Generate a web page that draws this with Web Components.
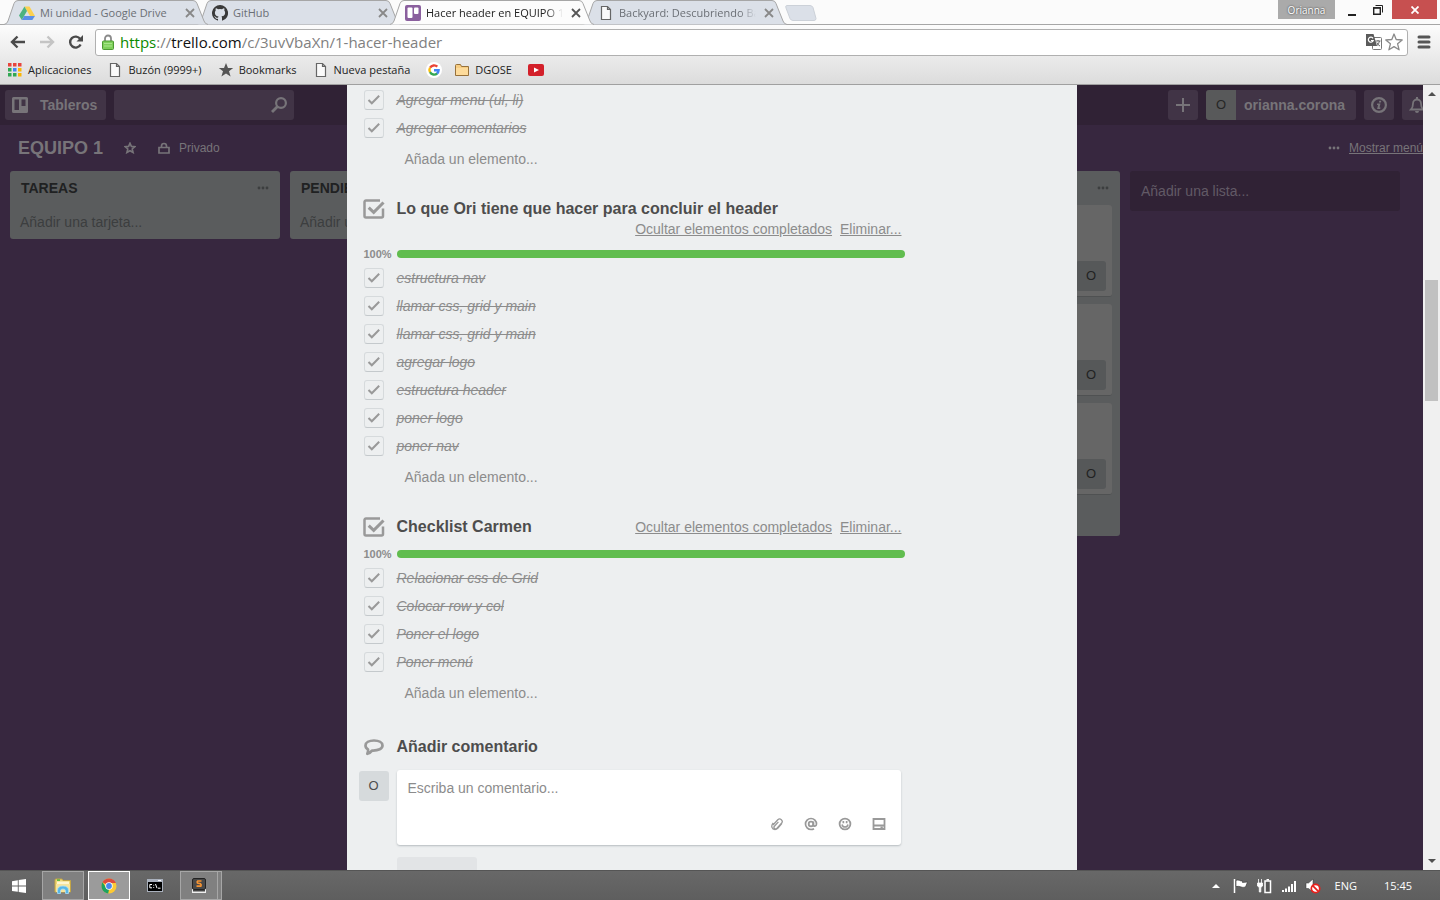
<!DOCTYPE html>
<html lang="es">
<head>
<meta charset="utf-8">
<title>Hacer header en EQUIPO 1</title>
<style>
html, body { margin: 0; height: 100%; overflow: hidden; }
body { font-family: "Liberation Sans", Arial, sans-serif; font-size: 14px; line-height: 20px; color: #4d4d4d; }
</style>
</head>
<body>
<desktop-screen>
  <browser-chrome slot="chrome">
    <browser-tab slot="tabs" icon="drive">Mi unidad - Google Drive</browser-tab>
    <browser-tab slot="tabs" icon="github">GitHub</browser-tab>
    <browser-tab slot="tabs" icon="trello" active fade>Hacer header en EQUIPO 1</browser-tab>
    <browser-tab slot="tabs" icon="page" fade>Backyard: Descubriendo Backyard</browser-tab>
    <bookmark-link slot="marks" icon="apps">Aplicaciones</bookmark-link>
    <bookmark-link slot="marks" icon="page">Buzón (9999+)</bookmark-link>
    <bookmark-link slot="marks" icon="starfull">Bookmarks</bookmark-link>
    <bookmark-link slot="marks" icon="page">Nueva pestaña</bookmark-link>
    <bookmark-link slot="marks" icon="google" label="Google"></bookmark-link>
    <bookmark-link slot="marks" icon="folder">DGOSE</bookmark-link>
    <bookmark-link slot="marks" icon="youtube" label="YouTube"></bookmark-link>
  </browser-chrome>
  <board-page slot="page">
    <board-list heading="TAREAS"></board-list>
    <board-list heading="PENDIENTES"></board-list>
    <board-list></board-list>
    <board-list>
      <board-card></board-card>
      <board-card></board-card>
      <board-card></board-card>
    </board-list>
    <card-window slot="window">
      <check-list>
        <check-item>Agregar menu (ul, li)</check-item>
        <check-item>Agregar comentarios</check-item>
      </check-list>
      <check-list heading="Lo que Ori tiene que hacer para concluir el header">
        <check-item>estructura nav</check-item>
        <check-item>llamar css, grid y main</check-item>
        <check-item>llamar css, grid y main</check-item>
        <check-item>agregar logo</check-item>
        <check-item>estructura header</check-item>
        <check-item>poner logo</check-item>
        <check-item>poner nav</check-item>
      </check-list>
      <check-list heading="Checklist Carmen">
        <check-item>Relacionar css de Grid</check-item>
        <check-item>Colocar row y col</check-item>
        <check-item>Poner el logo</check-item>
        <check-item>Poner menú</check-item>
      </check-list>
      <comment-form></comment-form>
    </card-window>
  </board-page>
  <task-bar slot="taskbar"></task-bar>
</desktop-screen>

<script>
const define = (name, render) => customElements.define(name, class extends HTMLElement {
  constructor() {
    super();
    const t = document.createElement('template');
    t.innerHTML = render(this);
    this.attachShadow({ mode: 'open' }).append(t.content.cloneNode(true));
  }
});

/* Icon set: [width, height, markup] */
const ICONS = {
  drive: [16, 16, '<path d="M5.5 1.5h5L16 11h-5z" fill="#fcd050"/><path d="M5.5 1.5 8 6 2.800 15 0 10.500z" fill="#4db380"/><path d="M5.200 11H16l-2.700 4H2.800z" fill="#5b8fe8"/>'],
  github: [16, 16, '<path fill="#3a3a3a" d="M8 0a8 8 0 0 0-2.530 15.590c.4.070.55-.170.55-.380v-1.340c-2.230.480-2.700-1.070-2.700-1.070-.360-.930-.890-1.170-.890-1.170-.730-.5.050-.490.050-.490.800.060 1.230.830 1.230.830.720 1.220 1.880.870 2.330.660.070-.520.280-.870.510-1.070-1.780-.200-3.640-.890-3.640-3.950 0-.870.310-1.590.820-2.150-.080-.200-.360-1.020.080-2.120 0 0 .670-.210 2.200.820a7.700 7.700 0 0 1 4 0c1.530-1.040 2.200-.820 2.200-.820.440 1.100.160 1.920.080 2.120.510.560.820 1.270.820 2.150 0 3.070-1.870 3.750-3.650 3.950.290.250.540.730.540 1.480v2.190c0 .210.150.460.550.380A8 8 0 0 0 8 0z"/>'],
  trello: [16, 16, '<rect width="16" height="16" rx="2" fill="#8a5f9e"/><rect x="2.500" y="2.500" width="5" height="10.500" rx="1" fill="#fff"/><rect x="9" y="2.500" width="4.500" height="6.500" rx="1" fill="#fff"/>'],
  page: [16, 16, '<path d="M3.500 1.500h6l3 3v10h-9z M9.500 1.500v3h3" fill="#fafafa" stroke="#666" stroke-width="1.200"/>'],
  apps: [16, 14, '<g transform="translate(1 0)"><path fill="#e8453c" d="M0 0h3.500v3.500H0zM5 0h3.500v3.500H5zM10 0h3.500v3.500H10z"/><path fill="#31a853" d="M0 5h3.500v3.500H0zM0 10h3.500v3.500H0z"/><path fill="#4285f4" d="M5 5h3.500v3.500H5z"/><path fill="#31a853" d="M5 10h3.500v3.500H5z"/><path fill="#fbb605" d="M10 5h3.500v3.500H10zM10 10h3.500v3.500H10z"/></g>'],
  starfull: [16, 16, '<path fill="#555" d="m8 1 2 5h5.200l-4.200 3.300 1.600 5.300L8 11.400l-4.600 3.200L5 9.300.8 6H6z"/>'],
  google: [16, 16, '<circle cx="8" cy="8" r="8" fill="#fff"/><g fill="none" stroke-width="2.400"><path d="M4.100 5.700A4.600 4.600 0 0 1 11.300 4.700" stroke="#ea4335"/><path d="M4 10.200a4.600 4.600 0 0 1 0-4.400" stroke="#fbbc05"/><path d="M11.200 11.300A4.600 4.600 0 0 1 4 10.200" stroke="#34a853"/><path d="M8 8.200h4.600a4.600 4.600 0 0 1-1.600 3.300" stroke="#4285f4"/></g>'],
  folder: [16, 16, '<path d="M1.500 3.500q0-1 1-1h4l1 2h7v9h-13z" fill="#f7cd82" stroke="#97713a"/><path d="M2 6h12v7H2z" fill="#fddb9b"/>'],
  youtube: [16, 12, '<rect width="16" height="12" rx="2" fill="#d3202a"/><path d="M6 3.500v5L11 6z" fill="#fff"/>'],
  close: [10, 10, '<path d="m1 1 8 8M9 1 1 9" stroke="currentColor" stroke-width="1.800"/>'],
  back: [16, 14, '<path d="M15 7H2M7.500 1.500 2 7l5.500 5.500" fill="none" stroke="currentColor" stroke-width="2.400"/>'],
  forward: [16, 14, '<path d="M1 7h13M8.500 1.500 14 7l-5.500 5.500" fill="none" stroke="currentColor" stroke-width="2.400"/>'],
  reload: [16, 16, '<path d="M12.600 10.500a5.500 5.500 0 1 1-.4-5.500" fill="none" stroke="currentColor" stroke-width="2.400"/><path d="M15 1v6.500H8.500z" fill="currentColor"/>'],
  lock: [12, 16, '<path d="M3 8V4.500a3 3 0 0 1 6 0V8" fill="none" stroke="#8a8a8a" stroke-width="1.800"/><rect x=".5" y="7" width="11" height="8.500" rx="1" fill="#7ed05a" stroke="#4c9a33"/><path d="M2 9.500h8M2 12h8" stroke="#a8e68c"/>'],
  translate: [16, 16, '<rect x="6.500" y="3.500" width="9" height="12" rx="1" fill="#fff" stroke="#777"/><path d="M0 0h7.500l3.500 12H0z" fill="#5b5b5b"/><path d="M7 4.400A2.500 2.500 0 1 0 7.200 6.500H5" fill="none" stroke="#fff" stroke-width="1.200"/><path d="M9.500 7h5M12 6v1M13.500 7q-.5 3-3 5M10.800 8.500q1 2.500 3.200 3.500" fill="none" stroke="#666"/>'],
  star: [18, 18, '<path d="m9 1 2.200 5.500 6 .5-4.600 3.800 1.500 6L9 13.600l-5.100 3.200 1.500-6L.8 7l6-.5z" fill="#fff" stroke="#8a8a8a" stroke-width="1.300" stroke-linejoin="round"/>'],
  menu: [14, 14, '<path d="M2 2h10M2 7h10M2 12h10" stroke="#555" stroke-width="3" stroke-linecap="round"/>'],
  min: [8, 12, '<path d="M0 10h8v2H0z" fill="#222"/>'],
  restore: [10, 10, '<path d="M.7 3h6.600v6.300H.7z" fill="none" stroke="#222" stroke-width="1.400"/><path d="M2.500.5h7v7M0 2.700h8" fill="none" stroke="#222"/>'],
  winclose: [8, 8, '<path d="m.5.5 7 7M7.500.5l-7 7" stroke="#fff" stroke-width="1.800"/>'],
  board: [16, 16, '<path fill="currentColor" fill-rule="evenodd" d="M1.500 0h13A1.500 1.500 0 0 1 16 1.500v13a1.500 1.500 0 0 1-1.500 1.500h-13A1.500 1.500 0 0 1 0 14.500v-13A1.500 1.500 0 0 1 1.500 0zM2.500 2.500v10.500h4.500V2.500zM9.500 2.500V9h4V2.500z"/>'],
  search: [16, 16, '<circle cx="10" cy="6" r="4.900" fill="none" stroke="currentColor" stroke-width="2.200"/><path d="M6.500 9.500 1 15" stroke="currentColor" stroke-width="2.800"/>'],
  plus: [14, 14, '<path d="M7 0v14M0 7h14" stroke="currentColor" stroke-width="2"/>'],
  info: [16, 16, '<circle cx="8" cy="8" r="6.900" fill="none" stroke="currentColor" stroke-width="2.200"/><path d="M8.300 3.700h2l-.4 1.900H7.900zM6.200 6.500h3.300l-1 4.100h1l-.3 1.500H6.100l1-4.100H5.900z" fill="currentColor"/>'],
  bell: [16, 16, '<path d="M2 12.500c2-2 2-3.500 2-6a4 4 0 0 1 8 0c0 2.500 0 4 2 6z" fill="none" stroke="currentColor" stroke-width="1.800"/><path d="M6 14a2 2 0 0 0 4 0zM7 0h2v3H7z" fill="currentColor"/>'],
  hollowstar: [12, 12, '<path d="m6 1.200 1.400 3.200 3.500.3-2.700 2.300.9 3.500L6 8.700l-3.100 1.800.9-3.500L1.100 4.700l3.500-.3z" fill="none" stroke="currentColor" stroke-width="1.600"/>'],
  padlock: [12, 12, '<path d="M1 5.500h10V11H1zM3.500 5.500V4a2.500 2.500 0 0 1 5 0v1.500" fill="none" stroke="currentColor" stroke-width="1.700"/>'],
  dots: [12, 4, '<circle cx="2" cy="2" r="1.400" fill="currentColor"/><circle cx="6" cy="2" r="1.400" fill="currentColor"/><circle cx="10" cy="2" r="1.400" fill="currentColor"/>'],
  check: [20, 20, '<path d="m4.500 10 3.300 3.300 7.400-7.500" fill="none" stroke="currentColor" stroke-width="2"/>'],
  checklist: [22, 20, '<path d="M17 1.500H3A1.500 1.500 0 0 0 1.500 3v14A1.500 1.500 0 0 0 3 18.500h15.500a1.500 1.500 0 0 0 1.500-1.500V9.500" fill="none" stroke="currentColor" stroke-width="2.500"/><path d="m5.700 8.700 5 4.700L20.500 3.500" fill="none" stroke="currentColor" stroke-width="3"/>'],
  comment: [20, 18, '<path d="M10 2.500c-5 0-8.500 2-8.500 5 0 2 1.200 3.200 2.500 4q.3 2-.7 4.300C5.500 15 7 14 8 12.600c6.500.3 10.500-2 10.500-5.100 0-3-3.500-5-8.500-5z" fill="none" stroke="currentColor" stroke-width="2.700" stroke-linejoin="round"/>'],
  clip: [14, 14, '<path d="m3 8 4.800-5.200a2.500 2.500 0 0 1 3.700 3.400L6.800 11.400a1.600 1.600 0 0 1-2.400-2.200l4-4.300M3.200 5.800C.5 9 2 12.500 5 12.600q1.500 0 3-1.600l4-4.600" fill="none" stroke="currentColor" stroke-width="1.300"/>'],
  at: [14, 14, '<circle cx="7" cy="7" r="2.300" fill="none" stroke="currentColor" stroke-width="1.800"/><path d="M9.400 4.500V8q.2 1.300 1.400 1.200 1.700-.3 1.700-2.200A5.500 5.500 0 1 0 7 12.500q1.700 0 3-.8" fill="none" stroke="currentColor" stroke-width="1.700"/>'],
  smile: [14, 14, '<circle cx="7" cy="7" r="5.400" fill="none" stroke="currentColor" stroke-width="1.800"/><path d="M4.500 4h1.700v2.200H4.500zM7.800 4h1.700v2.200H7.800z" fill="currentColor"/><path d="M4 7.500q.5 2.500 3 2.500t3-2.500" fill="none" stroke="currentColor" stroke-width="1.600"/>'],
  tray: [14, 14, '<path d="M1.500 2h11v10h-11zM2 8.500h10" fill="none" stroke="currentColor" stroke-width="1.800"/><path d="M8.500 9.500h2.300v1.500H8.500z" fill="currentColor"/>'],
  windows: [14, 14, '<path d="M0 2.200 5.800 1.200v5.300H0zM6.700 1 14 0v6.500H6.700zM0 7.500h5.800v5.300L0 11.900zM6.700 7.500H14V14l-7.300-1z" fill="#fff"/>'],
  explorer: [18, 16, '<path d="M1 2q0-1 1-1h6l1 1.500h7.500V14H1z" fill="#f0d775" stroke="#c3a545"/><path d="M3 3.500h12v3H3z" fill="#fff6d0"/><path d="M3 1.500h3v1.200H3z" fill="#29b330"/><path d="M2 6h14v8H2z" fill="#f7e49b"/><path d="M3.500 15.500v-3Q3.500 8 9 8t5.500 4.500v3h-3v-2.700q0-1.800-2.500-1.800t-2.500 1.800v2.700z" fill="#58b6e6" stroke="#a9def7" stroke-width=".8"/>'],
  chrome: [16, 16, '<circle cx="8" cy="8" r="7.500" fill="#fcc934"/><path d="M8 8 1.500 4.250A7.500 7.500 0 0 1 14.500 4.250L15 5H8z" fill="#dd4b3e"/><path d="M1.500 4.250 5.400 10 8 11.500l-.8 4A7.500 7.500 0 0 1 1.500 4.250z" fill="#1da261"/><circle cx="8" cy="8" r="3.700" fill="#fff"/><circle cx="8" cy="8" r="2.900" fill="#4a87ee"/>'],
  console: [16, 13, '<path d="M0 0h16v13H0z" fill="#a9b0bc"/><path d="M1 3h14v9H1z" fill="#000"/><path d="M5 5.500H2.800v3.300H5M6.700 5.800v.8M6.700 8.200V9M8.500 5l1.500 4.200M11 9.200h2.500" fill="none" stroke="#fff"/><path d="M11 1h3v1h-3z" fill="#fff"/>'],
  sublime: [14, 15, '<path d="M0 10h14v5H0z" fill="#eee"/><path d="M1 12h12v1.500H1z" fill="#444"/><rect x=".5" y=".5" width="13" height="11" rx="1.500" fill="#484848" stroke="#222"/><path d="M9.500 3H5.800Q4.700 3.800 5.500 5l3 .8q1.200 1 .3 2.400H4.500" fill="none" stroke="#f59332" stroke-width="1.700"/>'],
  up: [8, 5, '<path d="m0 5 4-4 4 4z" fill="currentColor"/>'],
  down: [8, 5, '<path d="m0 0 4 4 4-4z" fill="currentColor"/>'],
  flag: [16, 16, '<path d="M1.500 1v14" stroke="#fff" stroke-width="1.500"/><path d="M3 2.500c3-1.500 4 1 6.500.5v1.500l5-.5-2 5c-4 1.500-5-1.500-9.500-.5z" fill="#fff" stroke="#333" stroke-width=".6"/>'],
  battery: [16, 16, '<path d="M1.500 1v4M4.500 1v4M.5 5h5v3L3.800 9.500V14H2.300V9.500L.5 8z" fill="#fff" stroke="#fff" stroke-width=".8"/><path d="M8 3h5.500v11.500H8z" fill="#555" stroke="#fff" stroke-width="1.500"/><path d="M9.500 1h2.500v1.500H9.500z" fill="#fff"/>'],
  signal: [16, 14, '<path d="M1 11h2v2H1zM4 9.500h2V13H4zM7 7.500h2V13H7zM10 5h2v8h-2zM13 2h2v11h-2z" fill="#fff"/>'],
  mute: [16, 16, '<path d="M1 5h2.500L8 1v13L3.500 10.500H1z" fill="#fff" stroke="#333" stroke-width=".5"/><circle cx="10.500" cy="10.500" r="4.200" fill="#fff" stroke="#e8201c" stroke-width="1.700"/><path d="m7.700 7.700 5.600 5.600" stroke="#e8201c" stroke-width="1.700"/>']
};
define('ui-icon', el => {
  const [w, h, body] = ICONS[el.getAttribute('name')];
  return `<style>:host{display:block;flex:none}svg{display:block}</style>
  <svg width="${w}" height="${h}" viewBox="0 0 ${w} ${h}" aria-hidden="true">${body}</svg>`;
});
const icon = name => `<ui-icon name="${name}"></ui-icon>`;

const RESET = `*{box-sizing:border-box}
button{font:inherit;color:inherit;background:none;border:0;padding:0;margin:0;display:flex;align-items:center;justify-content:center}
a{color:inherit}`;

define('desktop-screen', () => `<style>
:host{display:grid;grid-template-rows:auto minmax(0,1fr) auto;height:100vh}
</style><slot name="chrome"></slot><slot name="page"></slot><slot name="taskbar"></slot>`);

define('browser-chrome', () => `<style>${RESET}
:host{display:block;font-family:"Open Sans","Noto Sans",sans-serif;font-size:11px;line-height:16px;color:#222;background:#fbfbfb;border-bottom:1px solid #a0a0a0}
.strip{display:flex;height:24px;padding-left:4px;align-items:flex-start}
.tabs{display:flex;padding-left:11px}
.new{width:32px;height:16px;margin:5px 0 0 -2px}
.win{display:flex;margin-left:auto;padding-right:3px;height:19px}
.user{width:57px;background:#aaa;color:#fff;font-size:10px;text-shadow:0 0 2px #222}
.min{width:34px}.res{width:18px}
.cls{width:45px;margin-left:5px;background:#c75050}
.tools{border-top:1px solid #a6a6a6;background:linear-gradient(#fcfcfc,#dcdcdc)}
.nav{display:flex;align-items:center;height:34px;padding:0 8px 0 10px;color:#4a4a4a}
.nav>button{width:16px;margin-right:13px}
.nav>.off{color:#c4c4c4}
form{flex:1;display:flex;align-items:center;height:27px;margin:0 8px 0 -2px;padding:0 4px 0 6px;border:1px solid #b0b0b0;border-radius:3px;background:#fff}
form div{flex:1;padding-left:6px;font-size:15px;line-height:20px;color:#808080;white-space:nowrap}
.s{color:#0b8a00}.h{color:#111}
.marks{display:flex;align-items:center;height:25px;padding:0 7px 4px}
.nav>.menu{margin-right:0}
form button{margin-left:3px}
</style>
<div class="strip"><div class="tabs" role="tablist"><slot name="tabs"></slot></div>
<button class="new" aria-label="Nueva pestaña"><svg width="32" height="16" viewBox="0 0 32 16"><path d="M2 .5h23q2 0 3 2l3 11q0 2-2 2H8q-2 0-3-2L1 3Q0 .5 2 .5z" fill="#dbe0e8" stroke="#ccd1d8"/></svg></button>
<div class="win"><button class="user">Orianna</button><button class="min" aria-label="Minimizar">${icon('min')}</button><button class="res" aria-label="Restaurar">${icon('restore')}</button><button class="cls" aria-label="Cerrar">${icon('winclose')}</button></div></div>
<div class="tools"><div class="nav">
<button aria-label="Atrás">${icon('back')}</button><button class="off" aria-label="Adelante">${icon('forward')}</button><button aria-label="Recargar">${icon('reload')}</button>
<form>${icon('lock')}<div role="textbox" aria-label="Dirección"><span class="s">https</span>://<span class="h">trello.com</span>/c/3uvVbaXn/1-hacer-header</div>
<button type="button" aria-label="Traducir">${icon('translate')}</button><button type="button" aria-label="Marcador">${icon('star')}</button></form>
<button class="menu" aria-label="Menú">${icon('menu')}</button></div>
<nav class="marks"><slot name="marks"></slot></nav></div>`);

define('browser-tab', el => {
  const on = el.hasAttribute('active');
  return `<style>${RESET}
:host{display:grid;width:204px;height:${on ? 25 : 24}px;margin-left:-11px;position:relative;z-index:${on ? 5 : 4 - [...el.parentNode.querySelectorAll('browser-tab')].indexOf(el)};color:${on ? '#222' : '#6b6f75'}}
svg,.in{grid-area:1/1}
.in{display:flex;align-items:center;height:24px;padding:2px 13px 0 15px;z-index:1}
.t{width:137px;margin-left:5px;margin-right:8px;white-space:nowrap;overflow:hidden;${el.hasAttribute('fade') ? '-webkit-mask-image:linear-gradient(to right,#000 88%,transparent 100%);mask-image:linear-gradient(to right,#000 88%,transparent 100%)' : ''}}
button{width:10px;color:${on ? '#555' : '#888'}}
</style><svg width="204" height="25" viewBox="0 0 204 25"><path d="M0 24.500Q3 24 4 21L10 3.500Q11 .5 14 .5H189Q192 .5 193 3.500L200 21Q201 24 204 24.500" fill="${on ? '#fcfcfc' : '#dbe0e8'}" stroke="#a6a6a6"/></svg>
<div class="in" role="tab">${icon(el.getAttribute('icon'))}<div class="t"><slot></slot></div><button aria-label="Cerrar pestaña">${icon('close')}</button></div>`;
});

define('bookmark-link', el => `<style>${RESET}
:host{display:block;margin-right:${el.getAttribute('label') ? 12 : 16}px}
a{display:flex;align-items:center;gap:5px;text-decoration:none;color:#222}
</style><a href="#" ${el.getAttribute('label') ? `aria-label="${el.getAttribute('label')}"` : ''}>${icon(el.getAttribute('icon'))}<slot></slot></a>`);

define('board-page', () => `<style>${RESET}
:host{display:grid;grid-template-columns:minmax(0,1fr) 17px;min-height:0}
.view{position:relative;overflow:hidden;background:#37273f;color:#777479}
/* the board keeps the full window width; the scrollbar covers its right edge */
.board{width:calc(100% + 17px)}
header{display:flex;align-items:center;gap:8px;height:40px;padding:0 8px 0 5px;background:#302235;font-weight:bold}
header button,.search{height:30px;border-radius:3px;background:#413446}
.home{padding:0 9px 0 7px;gap:12px}
.search{display:flex;align-items:center;width:180px;padding-right:7px}
.search input{flex:1;min-width:0;background:none;border:0;outline:0;color:inherit}
.sp{flex:1}
.sq{width:30px}
header .user{overflow:hidden;width:150px;justify-content:flex-start}
.av{width:30px;line-height:30px;margin-right:8px;background:#58595a;color:#262626;font-size:13px;font-weight:normal}
.bar{display:flex;align-items:center;height:46px;padding:0 17px 0 18px;font-size:12px}
h1{font-size:18px;line-height:24px;margin:0 21px 0 0}
.lk{margin-left:22px;gap:9px}
.bar a{margin-left:9px;white-space:nowrap}
.bar .m{margin-left:auto}
.lists{display:flex;align-items:flex-start;gap:10px;padding:0 10px}
.add{width:270px;height:40px;justify-content:flex-start;padding-left:11px;background:#302235;border-radius:3px;color:#625a66}
.scroll{display:grid;grid-template-rows:17px 178fr 121fr 452fr 17px;background:#f0f0f0;color:#505050;justify-items:center;align-items:center}
.thumb{grid-row:3;width:13px;height:100%;background:#c1c1c1}
.dn{grid-row:5}
</style>
<div class="view"><div class="board">
<header><button class="home">${icon('board')}Tableros</button><div class="search"><input type="text" aria-label="Buscar">${icon('search')}</div><div class="sp"></div>
<button class="sq" aria-label="Crear">${icon('plus')}</button><button class="user"><span class="av">O</span>orianna.corona</button><button class="sq" aria-label="Información">${icon('info')}</button><button class="sq" aria-label="Notificaciones">${icon('bell')}</button></header>
<div class="bar"><h1>EQUIPO 1</h1><button aria-label="Favorito">${icon('hollowstar')}</button><button class="lk">${icon('padlock')}Privado</button><div class="m">${icon('dots')}</div><a href="#">Mostrar menú</a></div>
<div class="lists"><slot></slot><button class="add">Añadir una lista...</button></div>
</div><slot name="window"></slot></div>
<div class="scroll">${icon('up')}<div class="thumb"></div><div class="dn">${icon('down')}</div></div>`);

define('board-list', el => `<style>${RESET}
:host{display:block;flex:none;width:270px;border-radius:3px;background:#5a5c5d;color:#3c3e3f}
.head{display:flex;align-items:center;justify-content:space-between;height:34px;padding:0 11px}
h2{font-size:14px;line-height:20px;margin:0;color:#202122}
.cards{display:grid;gap:7px;padding:0 8px}
.more{height:34px;padding-left:10px;${el.children.length ? 'margin-top:7px' : ''}}
</style><div class="head"><h2>${el.getAttribute('heading') || ''}</h2>${icon('dots')}</div>
<div class="cards"><slot></slot></div><button class="more">${el.hasAttribute('heading') ? 'Añadir una tarjeta...' : ''}</button>`);

define('board-card', () => `<style>
:host{display:flex;align-items:flex-end;justify-content:flex-end;height:92px;padding:0 6px 5px;box-sizing:border-box;border-radius:3px;background:#666;border-bottom:1px solid #4f5152}
span{width:30px;line-height:30px;text-align:center;border-radius:3px;background:#565859;color:#222;font-size:13px}
</style><span>O</span>`);

define('card-window', () => `<style>
:host{position:absolute;inset:0;display:flex;justify-content:center;color:#8c8c8c}
.panel{width:730px;box-sizing:border-box;padding:1px 172px 0 12px;background:#edeff0;overflow:hidden}
</style><div class="panel"><slot></slot></div>`);

define('check-list', el => {
  const title = el.getAttribute('heading');
  return `<style>${RESET}
:host{display:block;padding-left:5px}
.head,.prog{display:grid;grid-template-columns:20px minmax(0,1fr);column-gap:13px}
.head>ui-icon{margin-left:-1px;color:#999}
.line{display:flex;flex-wrap:wrap;align-content:flex-start;min-height:22px;padding-right:3px}
h3{font-size:16px;line-height:20px;margin:0;color:#4d4d4d}
.links{display:flex;gap:8px;margin-left:auto}
.prog{align-items:center;height:25px;padding-top:5px;font-size:11px;font-weight:bold}
.track{height:8px;border-radius:4px;background:#61bd4f}
.add{height:34px;margin:0 0 23px 41px;color:#8c8c8c}
</style>${title ? `<div class="head">${icon('checklist')}<div class="line"><h3>${title}</h3><div class="links"><a href="#">Ocultar elementos completados</a><a href="#">Eliminar...</a></div></div></div>
<div class="prog"><span>100%</span><div class="track" role="progressbar" aria-label="Progreso" aria-valuenow="100"></div></div>` : ''}
<slot></slot><button class="add">Añada un elemento...</button>`;
});

define('check-item', () => `<style>
:host{display:block}
label{display:flex;align-items:center;gap:13px;height:28px;font-style:italic;text-decoration:line-through}
.box{display:grid;color:#999}
input,ui-icon{grid-area:1/1}
input{appearance:none;width:20px;height:20px;margin:0;border:1px solid #d6dadc;border-bottom-color:#c4c9cc;border-radius:3px}
ui-icon{pointer-events:none;visibility:hidden}
input:checked+ui-icon{visibility:visible}
</style><label><span class="box"><input type="checkbox" checked>${icon('check')}</span><slot></slot></label>`);

define('comment-form', () => `<style>${RESET}
:host{display:block;padding-top:4px}
.head{display:flex;align-items:center;gap:13px;padding-left:5px;height:20px;color:#999}
h3{font-size:16px;line-height:20px;margin:0;color:#4d4d4d}
.row{display:grid;grid-template-columns:30px minmax(0,1fr);column-gap:8px;padding:13px 4px 0 0}
.av{height:30px;margin-top:1px;line-height:30px;text-align:center;border-radius:3px;background:#d6dadc;color:#4d4d4d;font-size:13px}
.box{height:75px;border-radius:3px;background:#fff;box-shadow:0 1px 2px #b6bbbf;color:#8c8c8c}
textarea{display:block;width:100%;height:43px;padding:8px 11px;border:0;outline:0;background:none;resize:none;font:inherit;color:inherit;overflow:hidden}
textarea::placeholder{color:#8c8c8c;opacity:1}
.tools{display:flex;justify-content:flex-end;gap:20px;padding:4px 15px;color:#999}
.send{grid-column:2;width:80px;height:32px;margin-top:12px;border-radius:3px;background:#e2e4e6}
</style><div class="head">${icon('comment')}<h3>Añadir comentario</h3></div>
<div class="row"><span class="av">O</span><div class="box"><textarea aria-label="Comentario" placeholder="Escriba un comentario..."></textarea>
<div class="tools"><button aria-label="Adjuntar">${icon('clip')}</button><button aria-label="Mencionar">${icon('at')}</button><button aria-label="Emoji">${icon('smile')}</button><button aria-label="Tarjeta">${icon('tray')}</button></div></div>
<button class="send" aria-label="Enviar"></button></div>`);

define('task-bar', () => `<style>${RESET}
:host{display:flex;align-items:stretch;height:30px;box-sizing:border-box;border-top:1px solid #555;background:linear-gradient(#686868,#5e5e5e);color:#fff;font-family:"Open Sans","Noto Sans",sans-serif;font-size:11px;line-height:16px}
.apps,.tray{display:flex}
.apps button{width:42px;border:1px solid transparent}
.apps .start{width:38px}
.apps .run{background:#808080;border-color:#a6a6a6}
.apps .on{background:#9b9b9b;border-color:#fff}
.apps .run.ex{margin-left:4px;margin-right:4px}
.apps .cmd{margin-left:4px}
.apps .sub{margin-left:4px;width:38px}
.apps .more{width:4px;border:1px solid #a6a6a6;border-left:0}
.tray{margin-left:auto;align-items:center;padding-right:28px}
.ic{display:flex;align-items:center;gap:8px;margin-right:14px}
.ic ui-icon:first-child{margin-right:5px}
.clock{margin-left:27px}
</style><div class="apps"><button class="start" aria-label="Inicio">${icon('windows')}</button><button class="run ex" aria-label="Explorador">${icon('explorer')}</button><button class="run on" aria-label="Chrome">${icon('chrome')}</button><button class="cmd" aria-label="Consola">${icon('console')}</button><button class="run sub" aria-label="Sublime Text">${icon('sublime')}</button><span class="run more"></span></div>
<div class="tray"><div class="ic">${icon('up')}${icon('flag')}${icon('battery')}${icon('signal')}${icon('mute')}</div><span>ENG</span><time class="clock">15:45</time></div>`);
</script>
</body>
</html>
